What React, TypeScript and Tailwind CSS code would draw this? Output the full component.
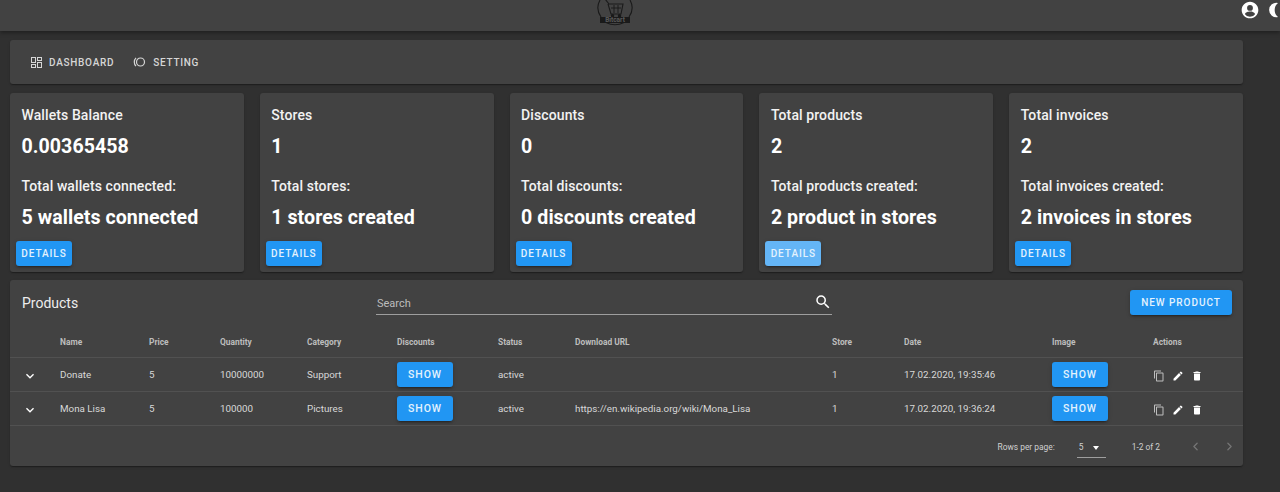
import { ChevronLeft, ChevronRight } from 'lucide-react';

const cards = [
  { title: 'Wallets Balance', value: '0.00365458', label: 'Total wallets connected:', total: '5 wallets connected' },
  { title: 'Stores', value: '1', label: 'Total stores:', total: '1 stores created' },
  { title: 'Discounts', value: '0', label: 'Total discounts:', total: '0 discounts created' },
  { title: 'Total products', value: '2', label: 'Total products created:', total: '2 product in stores' },
  { title: 'Total invoices', value: '2', label: 'Total invoices created:', total: '2 invoices in stores' },
];

const rows = [
  { name: 'Donate', price: '5', qty: '10000000', cat: 'Support', url: '', date: '17.02.2020, 19:35:46' },
  {
    name: 'Mona Lisa',
    price: '5',
    qty: '100000',
    cat: 'Pictures',
    url: 'https://en.wikipedia.org/wiki/Mona_Lisa',
    date: '17.02.2020, 19:36:24',
  },
];

const columns = 'grid grid-cols-[50px_89px_71px_87px_90px_101px_77px_257px_72px_148px_101px_1fr] items-center';
const cardShadow = 'shadow-[0_2px_1px_-1px_rgba(0,0,0,0.2),0_1px_1px_0_rgba(0,0,0,0.14),0_1px_3px_0_rgba(0,0,0,0.12)]';
const buttonShadow = 'shadow-[0_3px_1px_-2px_rgba(0,0,0,0.2),0_2px_2px_0_rgba(0,0,0,0.14),0_1px_5px_0_rgba(0,0,0,0.12)]';

function Logo() {
  return (
    <svg width="36" height="30" viewBox="0 0 36 30" className="block" fill="none" stroke="#1a1a1a" strokeWidth="1.1">
      <path d="M3 0 A16 16 0 0 0 4 17 M33 0 A16 16 0 0 1 32 17 M9 22.5 Q18 27 27 22.5" />
      <path d="M8 -1 L12 4 H26 L24 14 H14 L11 4" />
      <path d="M14 8 H24 M17 5 V13 M21 5 V13" strokeWidth="0.9" />
      <circle cx="15.5" cy="15.8" r="1.2" fill="#1a1a1a" />
      <circle cx="22.5" cy="15.8" r="1.2" fill="#1a1a1a" />
      <rect x="3" y="17" width="30" height="6" fill="#1a1a1a" stroke="none" />
      <text x="18" y="22.4" textAnchor="middle" fill="#5a5a5a" stroke="none" fontSize="6.5" fontWeight="700" fontFamily="Roboto, sans-serif">
        Bitcart
      </text>
    </svg>
  );
}

function DashboardIcon() {
  return (
    <svg width="11" height="11" viewBox="0 0 11 11" fill="none" stroke="currentColor" strokeWidth="1">
      <rect x="0.5" y="0.5" width="4" height="5" />
      <rect x="6.5" y="0.5" width="4" height="3" />
      <rect x="0.5" y="7.5" width="4" height="3" />
      <rect x="6.5" y="5.5" width="4" height="5" />
    </svg>
  );
}

function SettingIcon() {
  return (
    <svg width="14" height="12" viewBox="0 0 14 12" fill="none" stroke="currentColor" strokeWidth="1.2">
      <circle cx="8.5" cy="6" r="4" />
      <path d="M4 1.8 A6 6 0 0 0 4 10.2" />
    </svg>
  );
}

function ActionIcons() {
  return (
    <div className="mt-[2px] flex items-center gap-[7px] text-white">
      <svg width="12" height="12" viewBox="0 0 24 24" fill="#bdbdbd">
        <path d="M16 1H4c-1.1 0-2 .9-2 2v14h2V3h12V1zm3 4H8c-1.1 0-2 .9-2 2v14c0 1.1.9 2 2 2h11c1.1 0 2-.9 2-2V7c0-1.1-.9-2-2-2zm0 16H8V7h11v14z" />
      </svg>
      <svg width="12" height="12" viewBox="0 0 24 24" fill="currentColor">
        <path d="M3 17.25V21h3.75L17.81 9.94l-3.75-3.75L3 17.25zM20.71 7.04a1 1 0 0 0 0-1.41l-2.34-2.34a1 1 0 0 0-1.41 0l-1.83 1.83 3.75 3.75 1.83-1.83z" />
      </svg>
      <svg width="12" height="12" viewBox="0 0 24 24" fill="currentColor">
        <path d="M6 19c0 1.1.9 2 2 2h8c1.1 0 2-.9 2-2V7H6v12zM19 4h-3.5l-1-1h-5l-1 1H5v2h14V4z" />
      </svg>
    </div>
  );
}

function ShowButton() {
  return (
    <button className={`flex h-[25px] w-[56px] items-center justify-center rounded-[3px] bg-[#2196f3] text-[10.5px] font-medium tracking-[0.9px] text-[#e3f2fd] ${buttonShadow}`}>
      SHOW
    </button>
  );
}

export default function App() {
  return (
    <div className="h-[492px] w-[1280px] overflow-hidden bg-[#303030] font-['Roboto',sans-serif] text-white">
      <header className="relative h-[31px] bg-[#424242] shadow-[0_2px_4px_rgba(0,0,0,0.35)]">
        <div className="absolute top-0 left-[597px]">
          <Logo />
        </div>
        <div className="absolute top-0 left-[1240px] flex h-[20px] items-center">
          <svg width="20" height="20" viewBox="0 0 24 24" fill="currentColor" className="block">
            <path d="M12 2C6.48 2 2 6.48 2 12s4.48 10 10 10 10-4.48 10-10S17.52 2 12 2zm0 4a3.5 3.5 0 1 1 0 7 3.5 3.5 0 0 1 0-7zm0 14.2a7.2 7.2 0 0 1-6-3.22c.03-1.99 4-3.08 6-3.08s5.97 1.09 6 3.08a7.2 7.2 0 0 1-6 3.22z" />
          </svg>
          <svg width="20" height="20" viewBox="0 0 20 20" fill="currentColor" className="ml-[7px] block">
            <path d="M11 3 A7.2 7.2 0 1 0 11 17 A9 9 0 0 1 11 3z" />
          </svg>
        </div>
      </header>

      <main className="ml-[10px] w-[1233px] pt-[9px]">
        <nav className={`flex h-[44px] items-center gap-[18px] rounded-[3px] bg-[#424242] pl-[21px] text-[10px] font-medium tracking-[0.72px] text-[#d6d6d6] ${cardShadow}`}>
          <span className="flex items-center gap-[7px]">
            <DashboardIcon />
            DASHBOARD
          </span>
          <span className="flex items-center gap-[7px]">
            <SettingIcon />
            SETTING
          </span>
        </nav>

        <section className="mt-[9px] grid grid-cols-5 gap-[16px]">
          {cards.map((card, i) => (
            <div key={card.title} className={`h-[179px] rounded-[3px] bg-[#424242] px-[6px] pt-[14px] ${cardShadow}`}>
              <div className="px-[5.5px]">
                <p className="text-[14px] leading-[16px] font-medium tracking-[0.1px] text-[#f2f2f2]">{card.title}</p>
                <p className="mt-[11px] text-[19.6px] leading-[26px] font-bold tracking-[0.05px]">{card.value}</p>
                <p className="mt-[18px] text-[14px] leading-[16px] font-medium tracking-[0.1px] text-[#f2f2f2]">{card.label}</p>
                <p className="mt-[11px] text-[19.6px] leading-[26px] font-bold tracking-[0.05px]">{card.total}</p>
              </div>
              <button className={`mt-[10px] flex h-[25px] w-[56px] items-center justify-center rounded-[3px] text-[10px] font-medium tracking-[0.95px] text-[#e3f2fd] ${i === 3 ? 'bg-[#64b5f6]' : 'bg-[#2196f3]'} ${buttonShadow}`}>
                DETAILS
              </button>
            </div>
          ))}
        </section>

        <section className={`mt-[8px] h-[186px] rounded-[3px] bg-[#424242] ${cardShadow}`}>
          <div className="relative flex h-[45px] items-start">
            <h2 className="mt-[13px] ml-[12px] text-[14px] leading-[20px] text-[#ededed]">Products</h2>
            <div className="absolute top-[14px] left-[366px] flex h-[21px] w-[456px] items-center justify-between border-b border-[#9e9e9e] pl-[1px] text-[11px] text-[#bdbdbd]">
              Search
              <svg width="18" height="18" viewBox="0 0 24 24" fill="currentColor" className="mb-[4px] text-white">
                <path d="M15.5 14h-.79l-.28-.27A6.47 6.47 0 0 0 16 9.5 6.5 6.5 0 1 0 9.5 16c1.61 0 3.09-.59 4.23-1.57l.27.28v.79l5 4.99L20.49 19l-4.99-5zm-6 0C7.01 14 5 11.99 5 9.5S7.01 5 9.5 5 14 7.01 14 9.5 11.99 14 9.5 14z" />
              </svg>
            </div>
            <button className={`absolute top-[10px] right-[11px] flex h-[25px] w-[102px] items-center justify-center rounded-[3px] bg-[#2196f3] text-[10px] font-medium tracking-[0.95px] text-[#e3f2fd] ${buttonShadow}`}>
              NEW PRODUCT
            </button>
          </div>

          <div className={`${columns} h-[33px] border-b border-[#515151] pt-[2px] text-[8.4px] font-bold text-[#bdbdbd]`}>
            <span />
            <span>Name</span>
            <span>Price</span>
            <span>Quantity</span>
            <span>Category</span>
            <span>Discounts</span>
            <span>Status</span>
            <span>Download URL</span>
            <span>Store</span>
            <span>Date</span>
            <span>Image</span>
            <span>Actions</span>
          </div>

          {rows.map((row) => (
            <div key={row.name} className={`${columns} h-[34px] border-b border-[#515151] text-[9.8px] text-[#d8d8d8]`}>
              <span className="pl-[12px]">
                <svg width="16" height="16" viewBox="0 0 24 24" fill="currentColor" className="mt-[2px] text-white">
                  <path d="M16.59 8.59 12 13.17 7.41 8.59 6 10l6 6 6-6z" />
                </svg>
              </span>
              <span className="pt-[1px]">{row.name}</span>
              <span className="pt-[1px]">{row.price}</span>
              <span className="pt-[1px]">{row.qty}</span>
              <span className="pt-[1px]">{row.cat}</span>
              <ShowButton />
              <span className="pt-[1px]">active</span>
              <span className="pt-[1px]">{row.url}</span>
              <span className="pt-[1px]">1</span>
              <span className="pt-[1px]">{row.date}</span>
              <ShowButton />
              <ActionIcons />
            </div>
          ))}

          <div className="flex h-[40px] items-center justify-end text-[8.4px] text-[#d0d0d0]">
            <span className="mt-[2px]">Rows per page:</span>
            <span className="mt-[4px] ml-[22px] flex h-[19px] w-[29px] items-center justify-between border-b border-[#9e9e9e] pr-[7px] pl-[2px]">
              5
              <span className="h-0 w-0 border-x-[3.5px] border-t-[4px] border-x-transparent border-t-white" />
            </span>
            <span className="mt-[2px] ml-[26px]">1-2 of 2</span>
            <ChevronLeft size={13} strokeWidth={2.4} className="ml-[29px] text-[#757575]" />
            <ChevronRight size={13} strokeWidth={2.4} className="mr-[7px] ml-[21px] text-[#757575]" />
          </div>
        </section>
      </main>
    </div>
  );
}
